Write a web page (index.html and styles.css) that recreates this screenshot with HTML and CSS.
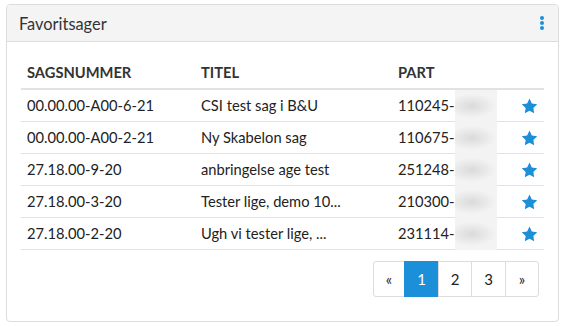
FILE: index.html
```html
<!DOCTYPE html>
<html lang="da">
<head>
    <meta charset="UTF-8">
    <meta name="viewport" content="width=device-width, initial-scale=1.0">
    <title>Favoritsager</title>
    <link rel="stylesheet" href="styles.css">
</head>
<body>
<section class="card">
    <header class="card-header">
        <h2 class="card-title">Favoritsager</h2>
        <button class="kebab" aria-label="Menu">
            <svg width="6" height="14" viewBox="0 0 6 14"><circle cx="3" cy="2" r="2"/><circle cx="3" cy="7" r="2"/><circle cx="3" cy="12" r="2"/></svg>
        </button>
    </header>

    <div class="card-body">
        <table class="cases">
            <colgroup>
                <col class="col-nr">
                <col class="col-title">
                <col class="col-part">
                <col class="col-star">
            </colgroup>
            <thead>
                <tr><th>Sagsnummer</th><th>Titel</th><th>Part</th><th></th></tr>
            </thead>
            <tbody id="rows"></tbody>
        </table>

        <nav class="pager">
            <a href="#">&laquo;</a>
            <a href="#" class="active">1</a>
            <a href="#">2</a>
            <a href="#">3</a>
            <a href="#">&raquo;</a>
        </nav>
    </div>
</section>

<script>
    const cases = [
        ['00.00.00-A00-6-21', 'CSI test sag i B&U', '110245-'],
        ['00.00.00-A00-2-21', 'Ny Skabelon sag', '110675-'],
        ['27.18.00-9-20', 'anbringelse age test', '251248-'],
        ['27.18.00-3-20', 'Tester lige, demo 10...', '210300-'],
        ['27.18.00-2-20', 'Ugh vi tester lige, ...', '231114-']
    ];

    const star = '<svg width="17" height="16" viewBox="0 0 24 23"><path d="M12 0.8l3.4 7 7.7 1.1-5.6 5.4 1.3 7.6L12 18.3l-6.8 3.6 1.3-7.6L.9 8.9l7.7-1.1z"/></svg>';

    let html = '';
    cases.forEach(function(c) {
        const title = c[1].replace('&', '&amp;');
        html += `<tr>
            <td>${c[0]}</td>
            <td>${title}</td>
            <td>${c[2]}<span class="masked"></span></td>
            <td class="fav">${star}</td>
        </tr>`;
    });
    document.getElementById('rows').innerHTML = html;
</script>
</body>
</html>
```

FILE: styles.css
```css
body {
    margin: 0;
    padding: 4px 8px 6px 6px;
    font-family: Lato, 'Open Sans', sans-serif;
    color: #222;
    background: #fff;
}

.card {
    border: 1px solid #dcdcdc;
    border-radius: 4px;
    overflow: hidden;
}

.card-header {
    display: flex;
    justify-content: space-between;
    align-items: center;
    height: 36px;
    padding: 0 13px 0 12px;
    background-color: #f4f4f4;
    border-bottom: 1px solid #dcdcdc;
}

.card-title {
    margin: 0;
    font-size: 16.4px;
    font-weight: 400;
    color: #333;
}

.kebab {
    display: flex;
    background: none;
    border: none;
    padding: 0;
    cursor: pointer;
    fill: #1c8fd9;
}

.card-body {
    padding: 11px 14px 24px;
}

.cases {
    width: 100%;
    border-collapse: collapse;
    table-layout: fixed;
    font-size: 14.7px;
}

.col-nr { width: 174px; }
.col-title { width: 197px; }
.col-part { width: 120px; }
.col-star { width: 32px; }

.cases th {
    text-align: left;
    font-weight: 700;
    text-transform: uppercase;
    color: #333;
    padding: 9px 6px 6px;
    line-height: 20px;
    border-bottom: 2px solid #e2e2e2;
}

.cases td {
    padding: 6px 6px;
    line-height: 19px;
    white-space: nowrap;
    border-bottom: 1px solid #e2e2e2;
}

.masked {
    position: relative;
    display: inline-block;
    vertical-align: top;
    width: 42px;
    height: 32px;
    margin: -6px 0 -7px;
    background: radial-gradient(ellipse 24px 12px at 40% 50%, #dadada, #f3f3f3);
}

.fav {
    text-align: center;
    fill: #1c8fd9;
}

.fav svg {
    display: block;
    margin-left: 3px;
}

.pager {
    display: flex;
    justify-content: flex-end;
    margin: 11px 5px 0 0;
}

.pager a {
    box-sizing: border-box;
    display: flex;
    align-items: center;
    justify-content: center;
    width: 35px;
    height: 36px;
    border: 1px solid #dcdcdc;
    margin-left: -1px;
    color: #222;
    text-decoration: none;
    font-size: 15px;
}

.pager a:first-child {
    border-radius: 3px 0 0 3px;
    width: 32px;
}

.pager a:nth-child(3) {
    width: 34px;
}

.pager a:last-child {
    border-radius: 0 3px 3px 0;
    width: 34px;
}

.pager a.active {
    background-color: #1c8fd9;
    border-color: #1c8fd9;
    color: #fff;
}
```
